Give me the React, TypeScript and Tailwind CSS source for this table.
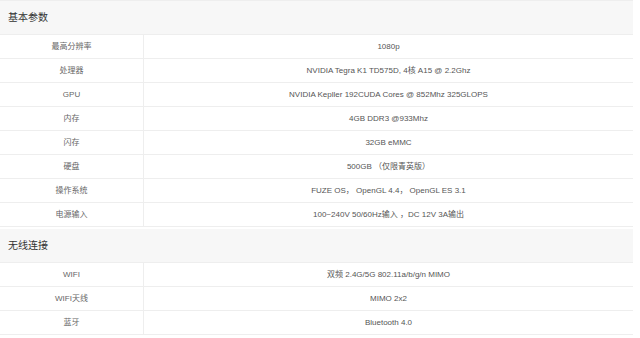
const sections = [
  {
    title: "基本参数",
    rows: [
      ["最高分辨率", "1080p"],
      ["处理器", "NVIDIA Tegra K1 TD575D, 4核 A15 @ 2.2Ghz"],
      ["GPU", "NVIDIA Kepller 192CUDA Cores @ 852Mhz 325GLOPS"],
      ["内存", "4GB DDR3 @933Mhz"],
      ["闪存", "32GB eMMC"],
      ["硬盘", "500GB （仅限青英版）"],
      ["操作系统", "FUZE OS， OpenGL 4.4， OpenGL ES 3.1"],
      ["电源输入", "100~240V 50/60Hz输入 ，DC 12V 3A输出"],
    ],
  },
  {
    title: "无线连接",
    rows: [
      ["WIFI", "双频 2.4G/5G 802.11a/b/g/n MIMO"],
      ["WIFI天线", "MIMO 2x2"],
      ["蓝牙", "Bluetooth 4.0"],
    ],
  },
];

export default function App() {
  return (
    <div className="w-[640px] h-[338px] overflow-hidden bg-white font-['Liberation_Sans','Noto_Sans_CJK_SC',sans-serif] text-[#555]">
      <div className="w-[633px] border-t border-[#eee]">
        {sections.map((section, si) => (
          <div key={si} className={si > 0 ? "mt-[2px]" : ""}>
            <div className="h-[34px] bg-[#f7f7f7] flex items-center pl-[8px] text-[10px] text-[#333] border-b border-[#eee]">
              {section.title}
            </div>
            {section.rows.map(([label, value], ri) => (
              <div key={ri} className="h-[24px] flex border-b border-[#eee] text-[8px]">
                <div className="w-[144px] border-r border-[#eee] flex items-center justify-center text-[#666]">
                  {label}
                </div>
                <div className="flex-1 flex items-center justify-center">{value}</div>
              </div>
            ))}
          </div>
        ))}
      </div>
    </div>
  );
}
